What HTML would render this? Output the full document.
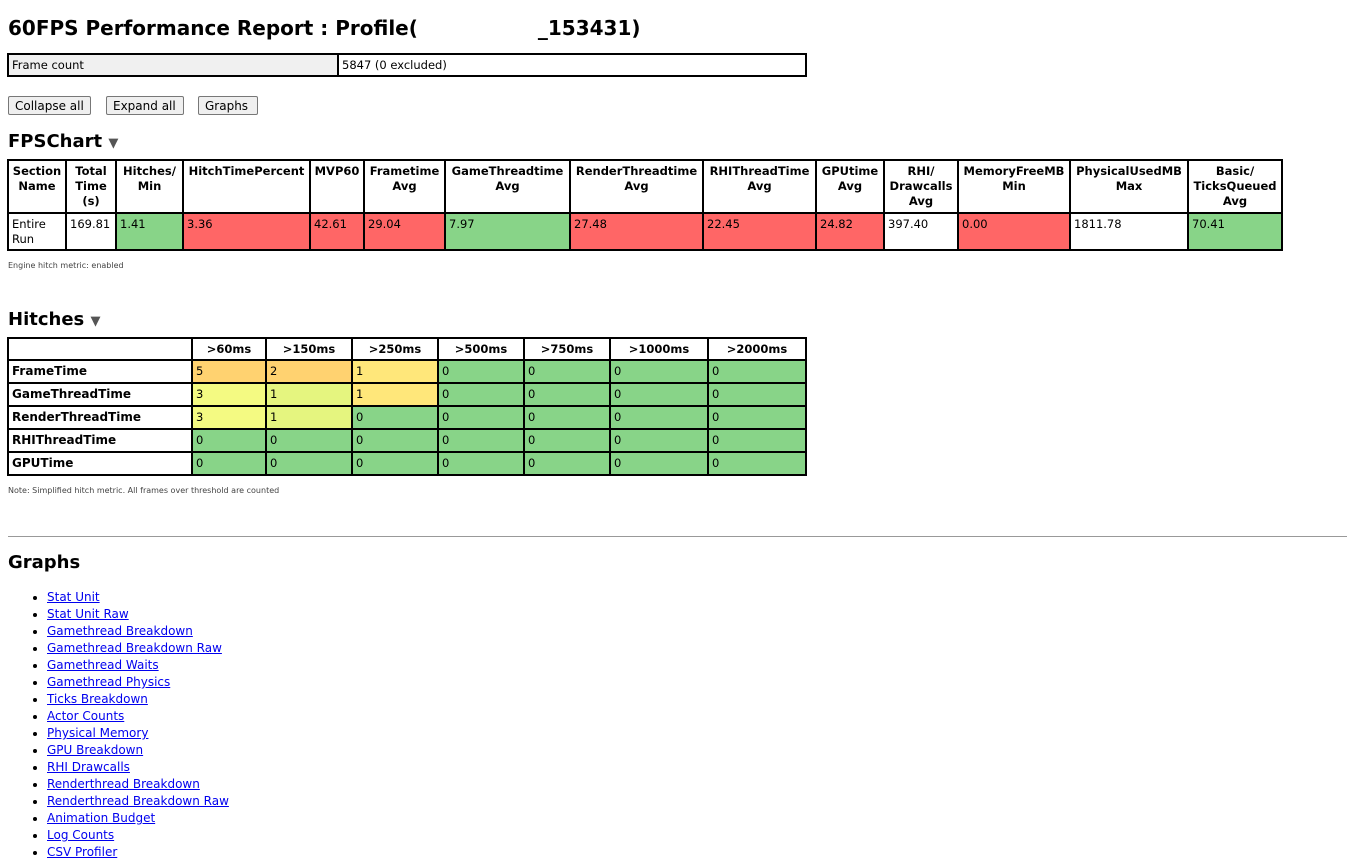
<!DOCTYPE html>
<html><head><meta charset="utf-8"><style>
body{margin:0;font-family:"DejaVu Sans","Liberation Sans",sans-serif;font-size:12px;color:#000;background:#fff;position:relative;width:1347px;height:863px;overflow:hidden}
.a{position:absolute}
h1{position:absolute;margin:0;left:8px;top:16px;font-size:20px;font-weight:bold;letter-spacing:0px}
h2{position:absolute;margin:0;left:8px;font-size:18px;font-weight:bold}
h2 span{font-size:13px;color:#555}
table{border-collapse:collapse;table-layout:fixed;position:absolute}
td,th{border:2px solid #000;padding:0 3px;vertical-align:top;font-size:11.5px;line-height:15px;overflow:hidden;white-space:nowrap}
th{font-weight:bold;text-align:center;padding-top:3px}
.g{background:#88d488}.r{background:#ff6666}.o{background:#ffd270}.y{background:#ffe77a}.ly{background:#f4fa82}.ll{background:#e5f57f}
.btn{position:absolute;top:96px;height:19px;border:1px solid #777;border-radius:2px;background:#efefef;font-size:12px;line-height:19px;padding:0 6px;box-sizing:border-box}
.small{position:absolute;font-size:8px;color:#444}
ul{position:absolute;margin:0;padding:0;left:47px;top:589px;list-style:disc}
li{height:17px;line-height:17px;font-size:12px}
li a{color:#00e;text-decoration:underline}
#ht td{font-weight:normal;height:21px;line-height:21px}
#ht td.l{font-weight:bold;font-size:12px}
</style></head><body>
<h1>60FPS Performance Report : Profile(<span style="display:inline-block;width:120px"></span>_153431)</h1>
<table style="left:7px;top:53px;width:800px">
<col style="width:330px"><col>
<tr><td style="background:#f0f0f0;height:20px;line-height:20px">Frame count</td><td style="line-height:20px">5847 (0 excluded)</td></tr></table>
<div class="btn" style="left:8px;width:83px">Collapse all</div>
<div class="btn" style="left:106px;width:78px">Expand all</div>
<div class="btn" style="left:198px;width:60px">Graphs</div>
<h2 style="top:131px">FPSChart <span>▼</span></h2>
<table style="left:7px;top:159px;width:1276px">
<col style="width:58px"><col style="width:50px"><col style="width:67px"><col style="width:127px"><col style="width:54px"><col style="width:81px"><col style="width:125px"><col style="width:133px"><col style="width:113px"><col style="width:68px"><col style="width:74px"><col style="width:112px"><col style="width:118px"><col style="width:94px">
<tr style="height:53px"><th>Section<br>Name</th><th>Total<br>Time<br>(s)</th><th>Hitches/<br>Min</th><th>HitchTimePercent</th><th>MVP60</th><th>Frametime<br>Avg</th><th>GameThreadtime<br>Avg</th><th>RenderThreadtime<br>Avg</th><th>RHIThreadTime<br>Avg</th><th>GPUtime<br>Avg</th><th>RHI/<br>Drawcalls<br>Avg</th><th>MemoryFreeMB<br>Min</th><th>PhysicalUsedMB<br>Max</th><th>Basic/<br>TicksQueued<br>Avg</th></tr>
<tr style="height:37px"><td style="padding-top:3px">Entire<br>Run</td><td style="padding-top:3px">169.81</td><td class="g" style="padding-top:3px">1.41</td><td class="r" style="padding-top:3px">3.36</td><td class="r" style="padding-top:3px">42.61</td><td class="r" style="padding-top:3px">29.04</td><td class="g" style="padding-top:3px">7.97</td><td class="r" style="padding-top:3px">27.48</td><td class="r" style="padding-top:3px">22.45</td><td class="r" style="padding-top:3px">24.82</td><td style="padding-top:3px">397.40</td><td class="r" style="padding-top:3px">0.00</td><td style="padding-top:3px">1811.78</td><td class="g" style="padding-top:3px">70.41</td></tr>
</table>
<div class="small" style="left:8px;top:261px">Engine hitch metric: enabled</div>
<h2 style="top:309px">Hitches <span>▼</span></h2>
<table id="ht" style="left:7px;top:337px;width:800px">
<col style="width:184px"><col style="width:74px"><col style="width:86px"><col style="width:86px"><col style="width:86px"><col style="width:86px"><col style="width:98px"><col>
<tr><th style="height:18px;padding-top:2px"></th><th>&gt;60ms</th><th>&gt;150ms</th><th>&gt;250ms</th><th>&gt;500ms</th><th>&gt;750ms</th><th>&gt;1000ms</th><th>&gt;2000ms</th></tr>
<tr><td class="l">FrameTime</td><td class="o">5</td><td class="o">2</td><td class="y">1</td><td class="g">0</td><td class="g">0</td><td class="g">0</td><td class="g">0</td></tr>
<tr><td class="l">GameThreadTime</td><td class="ly">3</td><td class="ll">1</td><td class="y">1</td><td class="g">0</td><td class="g">0</td><td class="g">0</td><td class="g">0</td></tr>
<tr><td class="l">RenderThreadTime</td><td class="ly">3</td><td class="ll">1</td><td class="g">0</td><td class="g">0</td><td class="g">0</td><td class="g">0</td><td class="g">0</td></tr>
<tr><td class="l">RHIThreadTime</td><td class="g">0</td><td class="g">0</td><td class="g">0</td><td class="g">0</td><td class="g">0</td><td class="g">0</td><td class="g">0</td></tr>
<tr><td class="l">GPUTime</td><td class="g">0</td><td class="g">0</td><td class="g">0</td><td class="g">0</td><td class="g">0</td><td class="g">0</td><td class="g">0</td></tr>
</table>
<div class="small" style="left:8px;top:486px">Note: Simplified hitch metric. All frames over threshold are counted</div>
<div class="a" style="left:8px;top:536px;width:1339px;height:0;border-top:1px solid #999"></div>
<h2 style="top:552px">Graphs</h2>
<ul>
<li><a>Stat Unit</a></li><li><a>Stat Unit Raw</a></li><li><a>Gamethread Breakdown</a></li><li><a>Gamethread Breakdown Raw</a></li><li><a>Gamethread Waits</a></li><li><a>Gamethread Physics</a></li><li><a>Ticks Breakdown</a></li><li><a>Actor Counts</a></li><li><a>Physical Memory</a></li><li><a>GPU Breakdown</a></li><li><a>RHI Drawcalls</a></li><li><a>Renderthread Breakdown</a></li><li><a>Renderthread Breakdown Raw</a></li><li><a>Animation Budget</a></li><li><a>Log Counts</a></li><li><a>CSV Profiler</a></li>
</ul>
</body></html>
